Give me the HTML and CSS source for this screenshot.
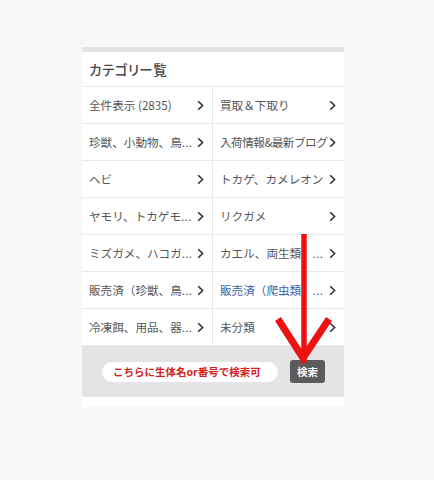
FILE: index.html
```html
<!DOCTYPE html>
<html lang="ja">
<head>
<meta charset="utf-8">
<link rel="stylesheet" href="styles.css">
</head>
<body>
<div class="panel">
  <div class="topbar"></div>
  <div class="header">カテゴリー覧</div>
  <div class="grid">
    <div class="cell"><span class="label">全件表示 (2835)</span><svg class="chev" viewBox="0 0 7 11"><path d="M1.2 1.2 L5.6 5.5 L1.2 9.8"/></svg></div>
    <div class="cell"><span class="label">買取＆下取り</span><svg class="chev" viewBox="0 0 7 11"><path d="M1.2 1.2 L5.6 5.5 L1.2 9.8"/></svg></div>
    <div class="cell"><span class="label">珍獣、小動物、鳥<span class="ell">...</span></span><svg class="chev" viewBox="0 0 7 11"><path d="M1.2 1.2 L5.6 5.5 L1.2 9.8"/></svg></div>
    <div class="cell"><span class="label tight">入荷情報&amp;最新ブログ</span><svg class="chev" viewBox="0 0 7 11"><path d="M1.2 1.2 L5.6 5.5 L1.2 9.8"/></svg></div>
    <div class="cell"><span class="label">ヘビ</span><svg class="chev" viewBox="0 0 7 11"><path d="M1.2 1.2 L5.6 5.5 L1.2 9.8"/></svg></div>
    <div class="cell"><span class="label">トカゲ、カメレオン</span><svg class="chev" viewBox="0 0 7 11"><path d="M1.2 1.2 L5.6 5.5 L1.2 9.8"/></svg></div>
    <div class="cell"><span class="label">ヤモリ、トカゲモ<span class="ell">...</span></span><svg class="chev" viewBox="0 0 7 11"><path d="M1.2 1.2 L5.6 5.5 L1.2 9.8"/></svg></div>
    <div class="cell"><span class="label">リクガメ</span><svg class="chev" viewBox="0 0 7 11"><path d="M1.2 1.2 L5.6 5.5 L1.2 9.8"/></svg></div>
    <div class="cell"><span class="label">ミズガメ、ハコガ<span class="ell">...</span></span><svg class="chev" viewBox="0 0 7 11"><path d="M1.2 1.2 L5.6 5.5 L1.2 9.8"/></svg></div>
    <div class="cell"><span class="label">カエル、両生類、<span class="ell">...</span></span><svg class="chev" viewBox="0 0 7 11"><path d="M1.2 1.2 L5.6 5.5 L1.2 9.8"/></svg></div>
    <div class="cell"><span class="label">販売済（珍獣、鳥<span class="ell">...</span></span><svg class="chev" viewBox="0 0 7 11"><path d="M1.2 1.2 L5.6 5.5 L1.2 9.8"/></svg></div>
    <div class="cell"><span class="label link">販売済（爬虫類、<span class="ell">...</span></span><svg class="chev" viewBox="0 0 7 11"><path d="M1.2 1.2 L5.6 5.5 L1.2 9.8"/></svg></div>
    <div class="cell"><span class="label">冷凍餌、用品、器<span class="ell">...</span></span><svg class="chev" viewBox="0 0 7 11"><path d="M1.2 1.2 L5.6 5.5 L1.2 9.8"/></svg></div>
    <div class="cell"><span class="label">未分類</span><svg class="chev" viewBox="0 0 7 11"><path d="M1.2 1.2 L5.6 5.5 L1.2 9.8"/></svg></div>
  </div>
  <div class="search">
    <div class="input">こちらに生体名or番号で検索可</div>
    <div class="btn">検索</div>
  </div>
  <div class="bottom"></div>
  <svg class="arrow" viewBox="0 0 262 140" width="262" height="140">
    <path d="M222 0 V129" stroke="#ee1111" stroke-width="5.5" fill="none"/>
    <path d="M196 85 L221 124 L247 85" stroke="#ee1111" stroke-width="7" fill="none" stroke-linecap="butt" stroke-linejoin="miter"/>
  </svg>
</div>
</body>
</html>
```
FILE: styles.css
```css
html, body {
  margin: 0;
  padding: 0;
}
body {
  background: #f8f8f8;
  font-family: "Noto Sans CJK JP", "Noto Sans", sans-serif;
  width: 434px;
  height: 480px;
  overflow: hidden;
}
.panel {
  position: relative;
  margin: 47px 0 0 82px;
  width: 262px;
  background: #fff;
}
.topbar {
  height: 5px;
  background: #e4e4e4;
}
.header {
  height: 35px;
  box-sizing: border-box;
  padding-left: 7px;
  display: flex;
  align-items: center;
  font-size: 13.5px;
  font-weight: 500;
  color: #444;
  font-feature-settings: "palt";
  letter-spacing: 0.5px;
  border-bottom: 1px solid #e9e9e9;
}
.grid {
  display: grid;
  grid-template-columns: 131px 131px;
}
.cell {
  height: 37px;
  box-sizing: border-box;
  border-bottom: 1px solid #e9e9e9;
  display: flex;
  align-items: center;
  justify-content: space-between;
  gap: 1px;
  padding: 0 8px 0 7px;
}
.cell:nth-child(odd) {
  border-right: 1px solid #e9e9e9;
}
.label {
  font-size: 11.6px;
  color: #555;
  white-space: nowrap;
}
.label.tight {
  letter-spacing: -0.5px;
}
.ell {
  letter-spacing: 0.3px;
}
.label.link {
  color: #3d5fa3;
}
.chev {
  width: 7px;
  height: 11px;
  flex: none;
  fill: none;
  stroke: #333;
  stroke-width: 1.6;
}
.search {
  height: 51px;
  background: #e4e4e4;
  display: flex;
  align-items: center;
  padding-left: 20px;
  gap: 12px;
}
.input {
  width: 176px;
  height: 20px;
  box-sizing: border-box;
  background: #fff;
  border-radius: 10px;
  padding-left: 11px;
  display: flex;
  align-items: center;
  font-size: 10.5px;
  font-weight: bold;
  color: #d42020;
  white-space: nowrap;
}
.btn {
  width: 35px;
  height: 23px;
  background: #5b5b5b;
  border-radius: 3px;
  color: #fff;
  font-size: 10.5px;
  font-weight: bold;
  display: flex;
  align-items: center;
  justify-content: center;
}
.bottom {
  height: 10px;
  background: #fff;
}
.arrow {
  position: absolute;
  left: 0;
  top: 187px;
  overflow: visible;
}
```
